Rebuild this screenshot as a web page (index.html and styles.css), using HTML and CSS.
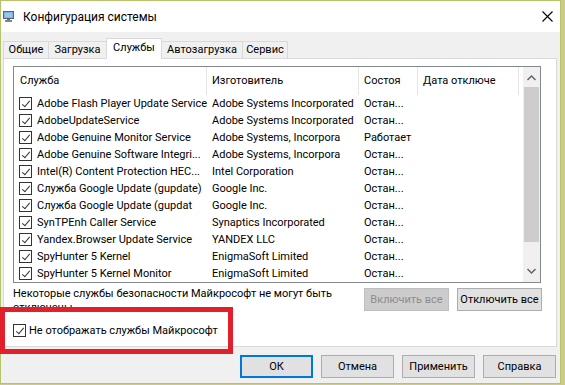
FILE: index.html
```html
<!DOCTYPE html>
<html lang="ru">
    <head>
        <meta charset="UTF-8">
        <title>Конфигурация системы</title>
        <link rel="stylesheet" href="styles.css">
    </head>
    <body>
        <div class="window">
            <div class="titlebar">
                <svg class="app-icon" width="11" height="11" viewBox="0 0 11 11">
                    <rect x="0.5" y="0.5" width="10" height="7" fill="#6f9fd6" stroke="#5b6777"/>
                    <rect x="1.5" y="1.5" width="8" height="5" fill="#9cc3ec"/>
                    <rect x="4" y="8" width="3" height="1" fill="#5b6777"/>
                    <rect x="2" y="9" width="7" height="2" fill="#7b8694"/>
                </svg>
                <span class="title">Конфигурация системы</span>
                <svg class="close" width="11" height="11" viewBox="0 0 11 11">
                    <path d="M0.5 0.5 L10.5 10.5 M10.5 0.5 L0.5 10.5" stroke="#000" stroke-width="1.1"/>
                </svg>
            </div>

            <div class="tabs">
                <div class="tab t-general">Общие</div>
                <div class="tab t-boot">Загрузка</div>
                <div class="tab t-services active">Службы</div>
                <div class="tab t-startup">Автозагрузка</div>
                <div class="tab t-tools">Сервис</div>
            </div>

            <div class="panel">
                <div class="listbox">
                    <div class="list">
                        <div class="head">
                            <span class="c1">Служба</span>
                            <span class="c2">Изготовитель</span>
                            <span class="c3">Состоя</span>
                            <span class="c4">Дата отключе</span>
                        </div>
                        <div class="row"><span class="c1"><i class="cb"></i>Adobe Flash Player Update Service</span><span class="c2">Adobe Systems Incorporated</span><span class="c3">Остан...</span></div>
                        <div class="row"><span class="c1"><i class="cb"></i>AdobeUpdateService</span><span class="c2">Adobe Systems Incorporated</span><span class="c3">Остан...</span></div>
                        <div class="row"><span class="c1"><i class="cb"></i>Adobe Genuine Monitor Service</span><span class="c2">Adobe Systems, Incorpora</span><span class="c3">Работает</span></div>
                        <div class="row"><span class="c1"><i class="cb"></i>Adobe Genuine Software Integri...</span><span class="c2">Adobe Systems, Incorpora</span><span class="c3">Остан...</span></div>
                        <div class="row"><span class="c1"><i class="cb"></i>Intel(R) Content Protection HEC...</span><span class="c2">Intel Corporation</span><span class="c3">Остан...</span></div>
                        <div class="row"><span class="c1"><i class="cb"></i>Служба Google Update (gupdate)</span><span class="c2">Google Inc.</span><span class="c3">Остан...</span></div>
                        <div class="row"><span class="c1"><i class="cb"></i>Служба Google Update (gupdat</span><span class="c2">Google Inc.</span><span class="c3">Остан...</span></div>
                        <div class="row"><span class="c1"><i class="cb"></i>SynTPEnh Caller Service</span><span class="c2">Synaptics Incorporated</span><span class="c3">Остан...</span></div>
                        <div class="row"><span class="c1"><i class="cb"></i>Yandex.Browser Update Service</span><span class="c2">YANDEX LLC</span><span class="c3">Остан...</span></div>
                        <div class="row"><span class="c1"><i class="cb"></i>SpyHunter 5 Kernel</span><span class="c2">EnigmaSoft Limited</span><span class="c3">Остан...</span></div>
                        <div class="row"><span class="c1"><i class="cb"></i>SpyHunter 5 Kernel Monitor</span><span class="c2">EnigmaSoft Limited</span><span class="c3">Остан...</span></div>
                    </div>
                    <div class="scrollbar">
                        <svg class="arrow" width="9" height="6" viewBox="0 0 9 6">
                            <path d="M0.5 5 L4.5 1 L8.5 5" fill="none" stroke="#606060" stroke-width="1.4"/>
                        </svg>
                        <div class="thumb"></div>
                        <svg class="arrow down" width="9" height="6" viewBox="0 0 9 6">
                            <path d="M0.5 1 L4.5 5 L8.5 1" fill="none" stroke="#606060" stroke-width="1.4"/>
                        </svg>
                    </div>
                </div>

                <div class="panel-foot">
                    <p class="note">Некоторые службы безопасности Майкрософт не могут быть<br>отключены.</p>
                    <div class="panel-buttons">
                        <button class="btn wide" disabled>Включить все</button>
                        <button class="btn wide">Отключить все</button>
                    </div>
                </div>

                <label class="hide-ms"><i class="cb"></i>Не отображать службы Майкрософт</label>
            </div>

            <div class="actions">
                <button class="btn default">ОК</button>
                <button class="btn">Отмена</button>
                <button class="btn">Применить</button>
                <button class="btn">Справка</button>
            </div>

            <div class="highlight"></div>
        </div>
    </body>
</html>
```

FILE: styles.css
```css
* {
    margin: 0;
    padding: 0;
    box-sizing: border-box;
}

body {
    background: #cfc98a;
    color: #000;
    font-family: Roboto, "Segoe UI", sans-serif;
    font-size: 11px;
}

.window {
    position: relative;
    width: 561px;
    height: 384px;
    border: 1px solid #b3c46b;
    background: #f0f0f0;
    display: flex;
    flex-direction: column;
}

/* title bar */
.titlebar {
    height: 31px;
    background: #fff;
    display: flex;
    align-items: center;
    padding-left: 2px;
}

.title {
    font-size: 12px;
}

.app-icon {
    margin-right: 9px;
    margin-top: -1px;
}

.close {
    margin-left: auto;
    margin-right: 7px;
}

/* tabs */
.tabs {
    display: flex;
    align-items: flex-end;
    height: 20px;
    margin-top: 6px;
    padding-left: 2px;
}

.tab {
    height: 17px;
    line-height: 15px;
    text-align: center;
    white-space: nowrap;
    border: 1px solid #d9d9d9;
    border-bottom: none;
    margin-right: -1px;
    background: #f0f0f0;
}

.tab.active {
    position: relative;
    z-index: 1;
    height: 21px;
    margin-bottom: -1px;
    line-height: 18px;
    background: #fff;
}

.t-general { width: 46px; }
.t-boot { width: 59px; }
.t-services { width: 56px; }
.t-startup { width: 82px; }
.t-tools { width: 46px; }

.panel {
    height: 289px;
    margin: 0 3px 0 2px;
    padding: 7px 14px 0 9px;
    background: #fff;
    border: 1px solid #d9d9d9;
}

/* services list */
.listbox {
    display: flex;
    width: 528px;
    height: 217px;
    border: 1px solid #828790;
}

.list {
    flex: 1;
    overflow: hidden;
}

.head,
.row {
    display: flex;
    white-space: nowrap;
}

.head {
    height: 28px;
    line-height: 27px;
}

.head span {
    padding-left: 5px;
    border-right: 1px solid #e5e5e5;
}

.head .c1 {
    padding-left: 6px;
}

.row {
    height: 17px;
    line-height: 17px;
}

.row span {
    flex: none;
    padding-left: 5px;
    overflow: hidden;
}

.row .c1 {
    display: flex;
    align-items: center;
    gap: 5px;
}

.c1 { width: 193px; }
.c2 { width: 152px; }
.c3 { width: 59px; }
.c4 { width: 101px; }

.cb {
    position: relative;
    flex: none;
    width: 13px;
    height: 13px;
    border: 1px solid #333;
    background: #fff;
}

.cb::after {
    content: "";
    position: absolute;
    left: 3.5px;
    top: 0.5px;
    width: 3px;
    height: 7px;
    border: solid #333;
    border-width: 0 1.3px 1.3px 0;
    transform: rotate(40deg);
}

.scrollbar {
    width: 17px;
    background: #f0f0f0;
    display: flex;
    flex-direction: column;
    align-items: center;
}

.arrow {
    margin-top: 8px;
}

.arrow.down {
    margin-top: auto;
    margin-bottom: 8px;
}

.thumb {
    width: 15px;
    height: 155px;
    margin-top: 6px;
    background: #cdcdcd;
}

/* under the list */
.panel-foot {
    display: flex;
    justify-content: space-between;
    margin-top: 4px;
}

.note {
    line-height: 14px;
    white-space: nowrap;
}

.panel-buttons {
    display: flex;
    flex: none;
    gap: 8px;
    margin-top: 1px;
}

.btn {
    width: 73px;
    height: 23px;
    border: 1px solid #adadad;
    background: #e1e1e1;
    font-family: inherit;
    font-size: 11px;
    color: #000;
    white-space: nowrap;
}

.btn.wide {
    width: 85px;
}

.btn:disabled {
    background: #cccccc;
    border-color: #bfbfbf;
    color: #8d8d8d;
}

.btn.default {
    border-color: #0078d7;
    box-shadow: inset 0 0 0 1px #0078d7;
}

.hide-ms {
    display: flex;
    align-items: center;
    gap: 3px;
    height: 17px;
    margin-top: 7px;
}

.actions {
    display: flex;
    justify-content: flex-end;
    gap: 8px;
    margin-top: 8px;
    padding-right: 4px;
}

/* red annotation frame */
.highlight {
    position: absolute;
    left: -1px;
    top: 306px;
    width: 233px;
    height: 47px;
    border: 5px solid #e0202b;
}
```
